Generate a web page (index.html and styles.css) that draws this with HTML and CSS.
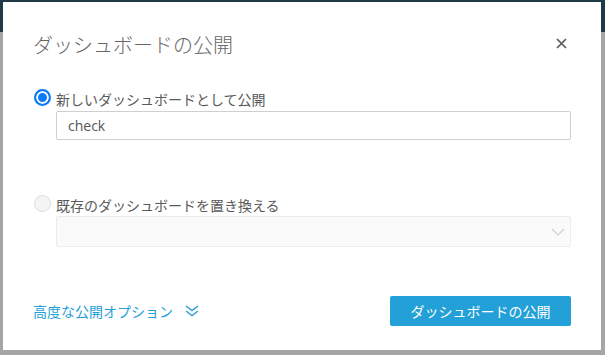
FILE: index.html
```html
<!DOCTYPE html>
<html lang="ja">
<head>
<meta charset="utf-8">
<title>ダッシュボードの公開</title>
<link rel="stylesheet" href="styles.css">
</head>
<body>
<div class="page">
  <div class="topbar"></div>
  <div class="backdrop"></div>
</div>
<div class="modal">
  <div class="header">
    <h1 class="title">ダッシュボードの公開</h1>
    <button class="close" aria-label="閉じる">
      <svg width="11" height="11" viewBox="0 0 11 11"><path d="M1 1L10 10M10 1L1 10" stroke="#5a5a5a" stroke-width="1.7" fill="none"/></svg>
    </button>
  </div>
  <div class="option first">
    <label class="radio-row"><span class="radio checked"></span><span class="label">新しいダッシュボードとして公開</span></label>
    <div class="field">check</div>
  </div>
  <div class="option second">
    <label class="radio-row"><span class="radio"></span><span class="label">既存のダッシュボードを置き換える</span></label>
    <div class="select">
      <svg class="chev" width="14" height="8" viewBox="0 0 14 8"><path d="M1 1L7 7L13 1" stroke="#cfcfcf" stroke-width="1.2" fill="none"/></svg>
    </div>
  </div>
  <div class="footer">
    <a class="advanced">高度な公開オプション
      <svg class="dbl" width="14" height="12" viewBox="0 0 14 12"><path d="M1 1L7 5.5L13 1M1 6L7 10.5L13 6" stroke="#259fd8" stroke-width="1.4" fill="none"/></svg>
    </a>
    <button class="publish">ダッシュボードの公開</button>
  </div>
</div>
</body>
</html>
```
FILE: styles.css
```css
* { box-sizing: border-box; }
html, body { margin: 0; padding: 0; }
body {
  width: 605px;
  height: 355px;
  overflow: hidden;
  background: #a3a3a3;
  font-family: "Open Sans", "Noto Sans CJK JP", sans-serif;
  color: #555;
}
.page { height: 355px; }
.topbar { height: 32px; background: #1f3a44; }
.backdrop { height: 323px; background: #a5a5a5; }
.modal {
  position: absolute;
  left: 3px;
  top: 2px;
  width: 598px;
  height: 348px;
  background: #fff;
  padding: 29px 30px 0 30px;
  display: flex;
  flex-direction: column;
}
.header {
  display: flex;
  align-items: center;
  justify-content: space-between;
  height: 28px;
}
.title {
  margin: 0;
  font-size: 20px;
  font-weight: 300;
  line-height: 28px;
  color: #666;
  font-family: "Noto Sans CJK JP", sans-serif;
}
.close {
  border: 0;
  background: none;
  padding: 0;
  margin-right: 4px;
  width: 11px;
  height: 11px;
  display: flex;
  margin-top: -4px;
}
.option.first { margin-top: 29px; }
.option.second { margin-top: 54px; }
.radio-row {
  display: flex;
  align-items: center;
  height: 20px;
  font-size: 14px;
  font-family: "Noto Sans CJK JP", sans-serif;
  color: #5a5a5a;
}
.radio {
  width: 17px;
  height: 17px;
  border-radius: 50%;
  margin: 0 5px 0 1px;
  border: 1px solid #dcdcdc;
  background: #f4f4f4;
  position: relative;
  top: -1px;
}
.radio.checked {
  border: 2px solid #0b7bfb;
  background: #0b7bfb;
  box-shadow: inset 0 0 0 2px #fff;
}
.label { line-height: 20px; position: relative; top: 1px; }
.field {
  margin: 3px 0 0 23px;
  height: 29px;
  border: 1px solid #cfcfcf;
  border-radius: 2px;
  padding: 0 11px;
  font-size: 14px;
  line-height: 27px;
  color: #555;
}
.select {
  margin: 2px 0 0 23px;
  height: 31px;
  border: 1px solid #ececec;
  border-radius: 2px;
  background: #fafafa;
  display: flex;
  align-items: center;
  justify-content: flex-end;
  padding-right: 5px;
}
.chev { margin-top: 1px; }
.footer {
  margin-top: 49px;
  display: flex;
  align-items: center;
  justify-content: space-between;
}
.advanced {
  display: flex;
  align-items: center;
  font-size: 14px;
  font-family: "Noto Sans CJK JP", sans-serif;
  color: #259fd8;
  margin-left: 0;
}
.dbl { margin-left: 12px; }
.publish {
  width: 181px;
  height: 30px;
  border: 0;
  border-radius: 2px;
  background: #23a0d8;
  color: #fff;
  font-size: 14px;
  font-family: "Noto Sans CJK JP", sans-serif;
  padding: 0;
}
```
